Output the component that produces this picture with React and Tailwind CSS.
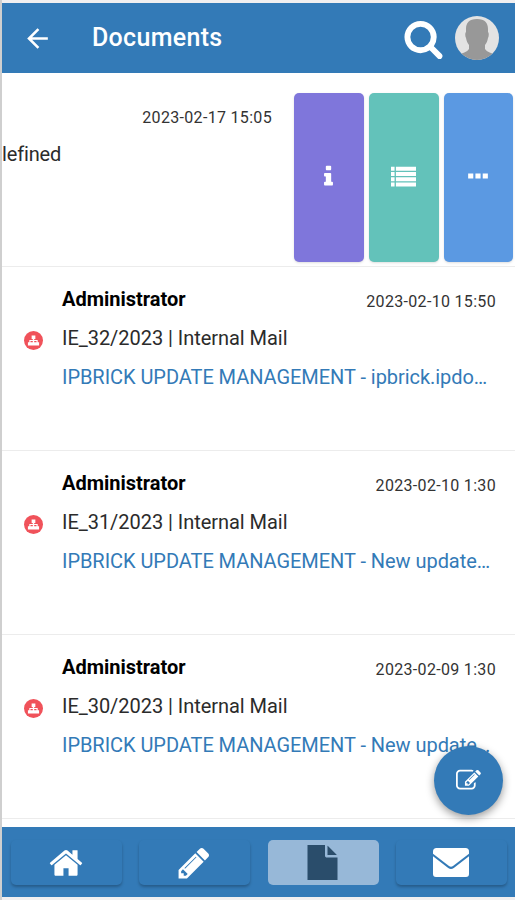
import React from 'react';
import { MdArrowBack } from 'react-icons/md';

const documents = [
    { author: 'Administrator', date: '2023-02-10 15:50', ref: 'IE_32/2023 | Internal Mail', subject: 'IPBRICK UPDATE MANAGEMENT - ipbrick.ipdo…' },
    { author: 'Administrator', date: '2023-02-10 1:30', ref: 'IE_31/2023 | Internal Mail', subject: 'IPBRICK UPDATE MANAGEMENT - New update…' },
    { author: 'Administrator', date: '2023-02-09 1:30', ref: 'IE_30/2023 | Internal Mail', subject: 'IPBRICK UPDATE MANAGEMENT - New update…' },
];

const paths = {
    search: 'M1216 832q0-185-131.5-316.5t-316.5-131.5-316.5 131.5-131.5 316.5 131.5 316.5 316.5 131.5 316.5-131.5 131.5-316.5zm512 832q0 52-38 90t-90 38q-54 0-90-38l-343-342q-179 124-399 124-143 0-273.5-55.5t-225-150-150-225-55.5-273.5 55.5-273.5 150-225 225-150 273.5-55.5 273.5 55.5 225 150 150 225 55.5 273.5q0 220-124 399l343 343q37 37 37 90z',
    info: 'M1216 1344v128q0 26-19 45t-45 19h-512q-26 0-45-19t-19-45v-128q0-26 19-45t45-19h64v-384h-64q-26 0-45-19t-19-45v-128q0-26 19-45t45-19h384q26 0 45 19t19 45v576h64q26 0 45 19t19 45zm-128-1152v192q0 26-19 45t-45 19h-256q-26 0-45-19t-19-45v-192q0-26 19-45t45-19h256q26 0 45 19t19 45z',
    list: 'M0 192h256v288h-256zM352 192h1440v288h-1440zM0 568h256v288h-256zM352 568h1440v288h-1440zM0 944h256v288h-256zM352 944h1440v288h-1440zM0 1320h256v288h-256zM352 1320h1440v288h-1440z',
    more: 'M160 704h384v384h-384zM704 704h384v384h-384zM1248 704h384v384h-384z',
    compose: 'M888 1184l116-116-152-152-116 116v56h96v96h56zm440-720q-16-16-33 1l-350 350q-17 17-1 33t33-1l350-350q17-17 1-33zm80 594v190q0 119-84.5 203.5t-203.5 84.5h-832q-119 0-203.5-84.5t-84.5-203.5v-832q0-119 84.5-203.5t203.5-84.5h832q63 0 117 25 15 7 18 23 3 17-9 29l-49 49q-14 14-32 8-23-6-45-6h-832q-66 0-113 47t-47 113v832q0 66 47 113t113 47h832q66 0 113-47t47-113v-126q0-13 9-22l64-64q15-15 35-7t20 29zm-96-738l288 288-672 672h-288v-288zm444 132l-92 92-288-288 92-92q28-28 68-28t68 28l152 152q28 28 28 68t-28 68z',
    home: 'M1472 992v480q0 26-19 45t-45 19h-384v-384h-256v384h-384q-26 0-45-19t-19-45v-480q0-1 .5-3t.5-3l575-474 575 474q1 2 1 6zm223-69l-62 74q-8 9-21 11h-3q-13 0-21-7l-692-577-692 577q-12 8-24 7-13-2-21-11l-62-74q-8-10-7-23.5t11-21.5l719-599q32-26 76-26t76 26l244 204v-195q0-14 9-23t23-9h192q14 0 23 9t9 23v408l219 182q10 8 11 21.5t-7 23.5z',
    pencil: 'M491 1536l91-91-235-235-91 91v107h128v128h107zm523-928q0-22-22-22-10 0-17 7l-542 542q-7 7-7 17 0 22 22 22 10 0 17-7l542-542q7-7 7-17zm-54-192l416 416-832 832h-416v-416zm683 96q0 53-37 90l-166 166-416-416 166-165q36-38 90-38 53 0 91 38l235 234q37 39 37 91z',
    file: 'M1152 512v-472q22 14 36 28l408 408q14 14 28 36h-472zm-128 32q0 40 28 68t68 28h544v1152h-1536v-1792h896z',
    sitemap: 'M640 192h512v480h-160v160h480v288h192v480h-512v-480h160v-160h-320v160h160v480h-512v-480h160v-160h-320v160h160v480h-512v-480h192v-288h480v-160h-160z',
};

function Icon({ name, className }) {
    return (
        <svg viewBox="0 0 1792 1792" fill="currentColor" className={className}>
            <path d={paths[name]} />
        </svg>
    );
}

function Envelope() {
    return (
        <svg viewBox="0 0 36 29" fill="currentColor" className="w-[36px] h-[29px]">
            <path d="M3.500 0h29Q36 0 36 3.500V5.800L20 18q-2 1.500-4 0L0 5.800V3.500Q0 0 3.500 0z" />
            <path d="M0 8.300l15.200 11.600q2.800 2 5.600 0L36 8.300V26q0 3-3 3H3q-3 0-3-3z" />
        </svg>
    );
}

function Avatar() {
    return (
        <svg viewBox="0 0 44 44" className="w-11 h-11 ml-[11px]">
            <clipPath id="avatar"><circle cx="22" cy="22" r="22" /></clipPath>
            <g clipPath="url(#avatar)">
                <rect width="44" height="44" fill="#e3e3e3" />
                <path d="M22 3c8 0 11 4 11 10v3c1 1 1 4 0 6-.5 3-1.500 5-3 7v4c2 3 6 4 9 5v8H5v-8c3-1 7-2 9-5v-4c-1.500-2-2.500-4-3-7-1-2-1-5 0-6v-3c0-6 3-10 11-10z" fill="#989898" />
            </g>
        </svg>
    );
}

function DocumentRow({ doc }) {
    return (
        <div className="h-[184px] shrink-0 flex border-b border-[#ececec]">
            <div className="w-[60px] pt-[64px] pl-[22px]">
                <div className="w-[19px] h-[19px] rounded-full bg-[#f0525a] text-white flex items-center justify-center">
                    <Icon name="sitemap" className="w-[13px] h-[13px]" />
                </div>
            </div>
            <div className="flex-1 pt-[20px] pr-[19px] text-[20px] leading-6">
                <div className="flex justify-between">
                    <span className="font-bold text-black">{doc.author}</span>
                    <span className="pt-[3px] text-base tracking-[0.32px] text-[#333]">{doc.date}</span>
                </div>
                <p className="mt-[12px] tracking-[-0.04px] text-[#2b2b2b]">{doc.ref}</p>
                <p className="mt-[15px] tracking-[-0.05px] text-[#337ab7] whitespace-nowrap">{doc.subject}</p>
            </div>
        </div>
    );
}

export default function App() {
    return (
        <div className="relative w-[515px] h-[900px] overflow-hidden flex flex-col bg-white border-l-2 border-[#cfcfcf] font-[Roboto,sans-serif]">
            <div className="h-[3px] shrink-0 bg-[#f1eff0]" />
            <header className="h-[70px] shrink-0 bg-[#337ab7] text-white flex items-center pl-[20px] pr-[16px]">
                <MdArrowBack size={31} />
                <h1 className="ml-[39px] flex-1 text-[25px] font-medium tracking-[0.3px]">Documents</h1>
                <Icon name="search" className="w-[41px] h-[41px]" />
                <Avatar />
            </header>

            <main className="flex-1 min-h-0 overflow-hidden flex flex-col">
                {/* Swiped row with its actions */}
                <div className="h-[194px] shrink-0 flex border-b border-[#ececec]">
                    <div className="w-[292px] pt-[33px]">
                        <p className="pr-[22px] text-right text-base leading-6 tracking-[0.32px] text-[#333]">2023-02-17 15:05</p>
                        <p className="mt-[12px] text-[20px] leading-6 tracking-[-0.15px] text-[#2b2b2b]">lefined</p>
                    </div>
                    <div className="flex gap-[5px] pt-[20px] text-white">
                        <div className="w-[70px] h-[169px] pb-[3px] pr-[1px] rounded-[5px] bg-[#7f76db] shadow flex items-center justify-center">
                            <Icon name="info" className="w-[25px] h-[25px]" />
                        </div>
                        <div className="w-[70px] h-[169px] pb-[3px] pr-[1px] rounded-[5px] bg-[#63c2ba] shadow flex items-center justify-center">
                            <Icon name="list" className="w-[25px] h-[25px]" />
                        </div>
                        <div className="w-[69px] h-[169px] pb-[3px] pr-[1px] rounded-[5px] bg-[#5b99e2] shadow flex items-center justify-center">
                            <Icon name="more" className="w-[24px] h-[24px]" />
                        </div>
                    </div>
                </div>
                {documents.map((doc) => <DocumentRow key={doc.ref} doc={doc} />)}
            </main>

            <nav className="h-[70px] shrink-0 bg-[#337ab7] text-white flex justify-between pl-[9px] pr-[8px] pt-[13px]">
                <div className="w-[111px] h-[45px] pr-[1px] rounded-[5px] shadow-[0_2px_3px_rgba(0,0,0,0.25)] flex items-center justify-center">
                    <Icon name="home" className="w-[36px] h-[36px]" />
                </div>
                <div className="w-[111px] h-[45px] pr-[1px] rounded-[5px] shadow-[0_2px_3px_rgba(0,0,0,0.25)] flex items-center justify-center">
                    <Icon name="pencil" className="w-[36px] h-[36px]" />
                </div>
                <div className="w-[111px] h-[45px] pr-[1px] rounded-[5px] bg-[#97b8d8] text-[#2a4d6b] flex items-center justify-center">
                    <Icon name="file" className="w-[35px] h-[35px]" />
                </div>
                <div className="w-[111px] h-[45px] rounded-[5px] shadow-[0_2px_3px_rgba(0,0,0,0.25)] flex items-center justify-center">
                    <Envelope />
                </div>
            </nav>
            <div className="h-[3px] shrink-0 bg-[#f1eff0]" />

            <button className="absolute left-[432px] top-[746px] w-[69px] h-[69px] rounded-full bg-[#337ab7] text-white shadow-[0_3px_8px_rgba(0,0,0,0.4)] flex items-center justify-center">
                <Icon name="compose" className="w-[25px] h-[25px]" />
            </button>
        </div>
    );
}
